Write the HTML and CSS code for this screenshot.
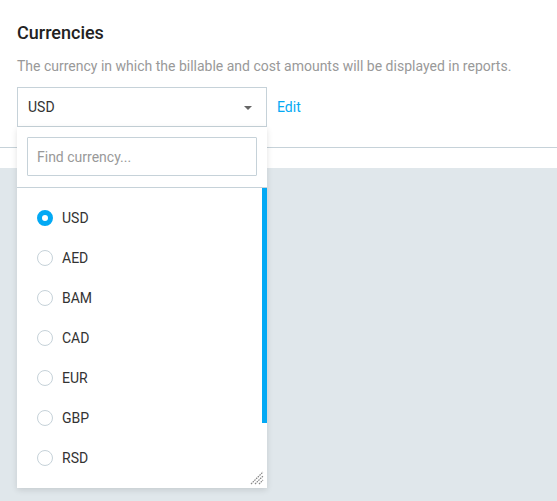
FILE: index.html
```html
<!DOCTYPE html>
<html>
<head>
<meta charset="utf-8">
<link rel="stylesheet" href="styles.css">
</head>
<body>
<div class="settings">
  <h2 class="title">Currencies</h2>
  <p class="desc">The currency in which the billable and cost amounts will be displayed in reports.</p>
  <div class="row">
    <div class="select-wrap">
      <div class="select">
        <span>USD</span>
        <span class="caret"></span>
      </div>
      <div class="dropdown">
        <div class="search-wrap">
          <input class="search" type="text" placeholder="Find currency...">
        </div>
        <ul class="list">
          <li class="item"><span class="radio checked"></span>USD</li>
          <li class="item"><span class="radio"></span>AED</li>
          <li class="item"><span class="radio"></span>BAM</li>
          <li class="item"><span class="radio"></span>CAD</li>
          <li class="item"><span class="radio"></span>EUR</li>
          <li class="item"><span class="radio"></span>GBP</li>
          <li class="item"><span class="radio"></span>RSD</li>
        </ul>
        <span class="scrollbar"></span>
        <svg class="grip" width="14" height="14" viewBox="0 0 14 14">
          <path d="M1 13 L13 1 M5 13 L13 5 M9 13 L13 9" stroke="#888" stroke-width="1.2" stroke-dasharray="1.6 0.8" fill="none"/>
        </svg>
      </div>
    </div>
    <a class="edit">Edit</a>
  </div>
</div>
<div class="divider"></div>
<div class="gray"></div>
</body>
</html>
```

FILE: styles.css
```css
* { box-sizing: border-box; }
html, body { margin: 0; padding: 0; }
body {
  font-family: Roboto, "Liberation Sans", sans-serif;
  background: #fff;
  width: 557px;
  height: 501px;
  overflow: hidden;
  display: flex;
  flex-direction: column;
}
.settings {
  padding: 21px 0 20px 17px;
}
.title {
  margin: 0;
  font-size: 18px;
  font-weight: 500;
  line-height: 24px;
  color: #222;
}
.desc {
  margin: 11px 0 0;
  font-size: 14px;
  line-height: 20px;
  color: #999;
}
.row {
  margin-top: 11px;
  display: flex;
  align-items: center;
  gap: 10px;
}
.select-wrap {
  position: relative;
  width: 250px;
}
.select {
  height: 40px;
  border: 1px solid #c6d2d9;
  display: flex;
  align-items: center;
  justify-content: space-between;
  padding: 0 14px 0 10px;
  font-size: 14px;
  color: #333;
}
.caret {
  width: 0;
  height: 0;
  border-left: 4px solid transparent;
  border-right: 4px solid transparent;
  border-top: 4px solid #666;
  margin-top: 1px;
}
.edit {
  font-size: 14px;
  color: #03a9f4;
  cursor: pointer;
}
.dropdown {
  position: absolute;
  left: 0;
  top: 40px;
  width: 250px;
  background: #fff;
  box-shadow: 0 2px 6px rgba(0, 0, 0, 0.12);
  z-index: 2;
}
.search-wrap {
  padding: 10px 10px 11px;
  border-bottom: 1px solid #c6d2d9;
}
.search {
  display: block;
  width: 100%;
  height: 39px;
  border: 1px solid #c6d2d9;
  border-radius: 1px;
  padding: 0 9px;
  font-family: inherit;
  font-size: 14px;
  color: #333;
  outline: none;
}
.search::placeholder { color: #999; }
.list {
  list-style: none;
  margin: 0;
  padding: 10px 0;
}
.item {
  height: 40px;
  display: flex;
  align-items: center;
  gap: 9px;
  padding-left: 20px;
  font-size: 14px;
  color: #333;
}
.radio {
  width: 16px;
  height: 16px;
  border-radius: 50%;
  border: 1px solid #c6d2d9;
  background: #fff;
  flex: none;
}
.radio.checked {
  border: 5px solid #03a9f4;
}
.scrollbar {
  position: absolute;
  right: 0;
  top: 61px;
  width: 5px;
  height: 235px;
  background: #03a9f4;
}
.grip {
  position: absolute;
  right: 3px;
  bottom: 3px;
}
.divider {
  height: 1px;
  flex: none;
  background: #c6d2d9;
}
.gray {
  margin-top: 20px;
  flex: 1;
  background: #e0e7eb;
}
```
